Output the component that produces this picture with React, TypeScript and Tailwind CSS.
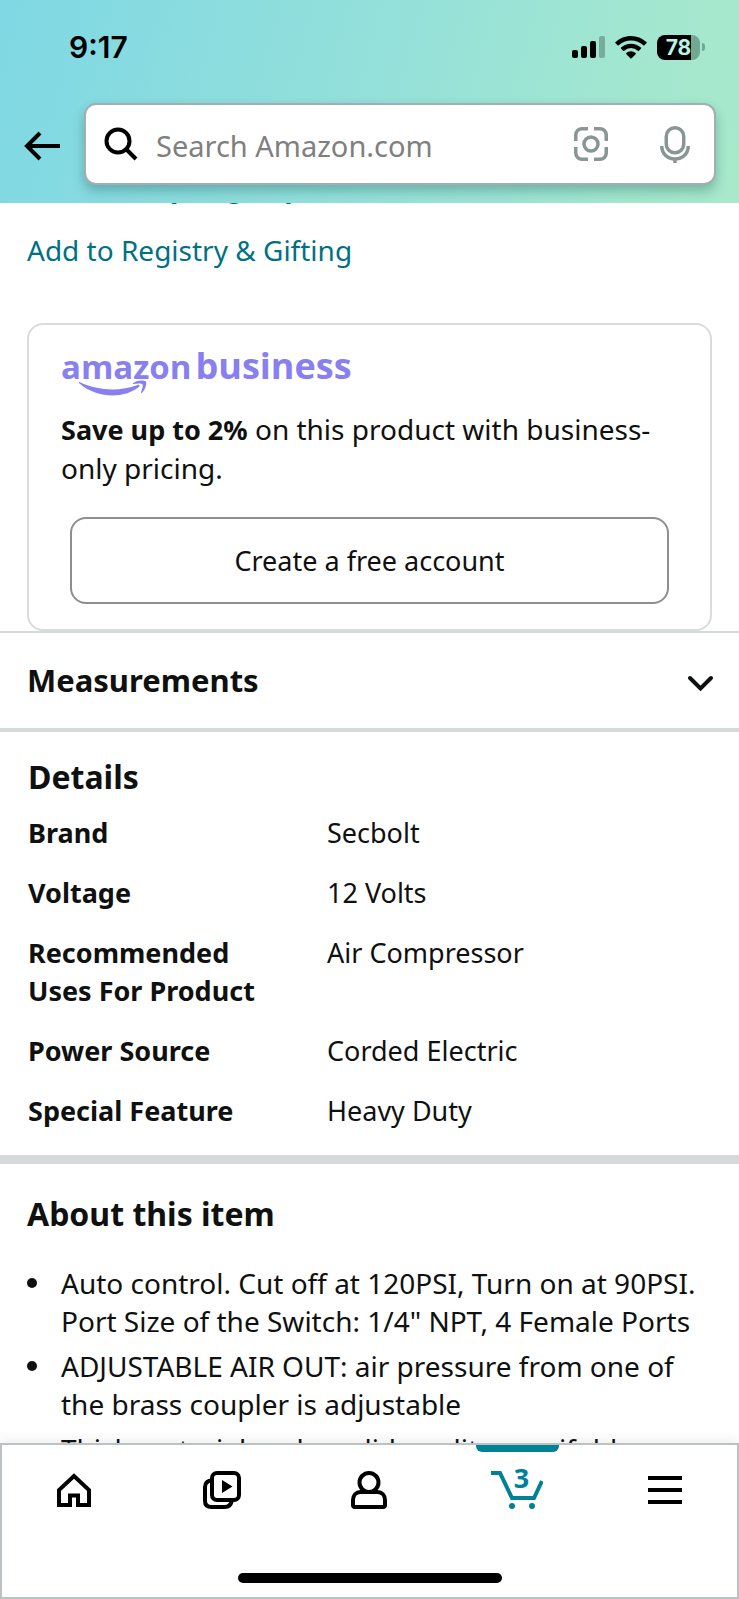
import React from 'react';

const details = [
  { label: 'Brand', value: 'Secbolt' },
  { label: 'Voltage', value: '12 Volts' },
  { label: 'Recommended Uses For Product', value: 'Air Compressor' },
  { label: 'Power Source', value: 'Corded Electric' },
  { label: 'Special Feature', value: 'Heavy Duty' },
];

const bullets = [
  'Auto control. Cut off at 120PSI, Turn on at 90PSI. Port Size of the Switch: 1/4" NPT, 4 Female Ports',
  'ADJUSTABLE AIR OUT: air pressure from one of the brass coupler is adjustable',
  'Thick material and a solid quality manifold',
];

const StatusBar = () => (
  <div className="flex items-center justify-between pl-[69px] pr-[34px] pt-8">
    <span className="font-[Inter] text-[30px] leading-[30px] font-semibold">9:17</span>
    <div className="flex items-center gap-[10px]">
      <svg width="33" height="22" viewBox="0 0 33 22" aria-label="Signal">
        <rect x="0" y="14" width="6" height="8" rx="2" />
        <rect x="9" y="10" width="6" height="12" rx="2" />
        <rect x="18" y="5" width="6" height="17" rx="2" />
        <rect x="27" y="0" width="6" height="22" rx="2" opacity="0.25" />
      </svg>
      <svg width="32" height="24" viewBox="0 0 32 24" aria-label="Wi-Fi">
        <path d="M16 1C10 1 4.600 3.300.6 7.100a.8.800 0 0 0 0 1.200l2 2a.8.800 0 0 0 1.100 0A18 18 0 0 1 16 5.400a18 18 0 0 1 12.300 4.900.8.800 0 0 0 1.100 0l2-2a.8.800 0 0 0 0-1.200A22.300 22.300 0 0 0 16 1Z" />
        <path d="M16 8.700c-3.800 0-7.300 1.500-9.900 3.900a.8.800 0 0 0 0 1.200l2 2a.8.800 0 0 0 1.100 0A10 10 0 0 1 16 13.100a10 10 0 0 1 6.800 2.700.8.800 0 0 0 1.100 0l2-2a.8.800 0 0 0 0-1.200A14.500 14.500 0 0 0 16 8.700Z" />
        <path d="M16 16.200c-1.800 0-3.400.7-4.600 1.800a.8.800 0 0 0 0 1.200l4 4a.8.800 0 0 0 1.200 0l4-4a.8.800 0 0 0 0-1.200 6.800 6.800 0 0 0-4.600-1.800Z" />
      </svg>
      <div className="flex items-center gap-[2px]">
        <div className="flex h-[25px] w-[43px] items-center justify-center rounded-[8px] bg-[linear-gradient(90deg,#000_79%,#70a894_79%)] font-[Inter] text-[21px] leading-[25px] font-bold text-[#b8f5e4]">
          78
        </div>
        <div className="h-2 w-[3px] rounded-r-full bg-[#70a894]" />
      </div>
    </div>
  </div>
);

const SearchBar = () => (
  <div className="flex items-center pt-[41px] pr-[23px] pb-[18px] pl-6">
    <button aria-label="Back" className="mr-6 pt-1">
      <svg width="36" height="30" viewBox="0 0 36 30" fill="none" stroke="#000" strokeWidth="4">
        <path d="M16 2 3 15l13 13M3 15h33" />
      </svg>
    </button>
    <form className="flex h-[82px] min-w-0 flex-1 items-center rounded-xl border-2 border-[#a3aeb0] bg-white pl-[18px] pr-[24px] shadow-[0_6px_12px_rgba(0,70,70,0.3)]">
      <svg className="shrink-0" width="34" height="34" viewBox="0 0 34 34" fill="none" stroke="#000" strokeWidth="4">
        <circle cx="14" cy="14" r="11.500" />
        <path d="m22 22 10 10" />
      </svg>
      <input
        type="text"
        aria-label="Search Amazon.com"
        placeholder="Search Amazon.com"
        className="ml-[18px] min-w-0 flex-1 pt-1 text-[29px] leading-[38px] outline-none placeholder:text-[#7f7f7f] placeholder:opacity-100"
      />
      <button type="button" aria-label="Search by camera">
        <svg width="34" height="34" viewBox="0 0 34 34" fill="none" stroke="#8a9696" strokeWidth="3.500">
          <path d="M14 1.750H8A6.250 6.250 0 0 0 1.750 8v6M20 1.750h6A6.250 6.250 0 0 1 32.250 8v6M32.250 20v6A6.250 6.250 0 0 1 26 32.250h-6M14 32.250H8A6.250 6.250 0 0 1 1.750 26v-6" />
          <circle cx="17" cy="17" r="7" />
        </svg>
      </button>
      <button type="button" aria-label="Search by voice" className="ml-[52px]">
        <svg width="30" height="37" viewBox="0 0 30 37" fill="none" stroke="#8a9696" strokeWidth="3.500">
          <rect x="6.250" y="1.750" width="17.500" height="25" rx="8.750" />
          <path d="M1.750 20c0 8 6 13 13.250 13s13.250-5 13.250-13M15 33v4" />
        </svg>
      </button>
    </form>
  </div>
);

const BusinessCard = () => (
  <section className="mx-[27px] mt-[54px] rounded-2xl border-2 border-[#d9dcdc] px-8 pt-[17px] pb-[25px]">
    <div className="relative text-[#8880f0]">
      <div className="flex items-baseline gap-[4px] font-['Open_Sans'] text-[36px] leading-[48px] font-bold">
        <span className="text-[33px]">amazon</span>
        <span>business</span>
      </div>
      <svg className="absolute top-[38px] left-[18px]" width="68" height="17" viewBox="0 0 68 17" fill="currentColor">
        <path d="M.5 2C18 10.500 40 12 58.500 5c2-.8 3 .8 1 2.200C44 19 18 18.500.2 3.200-.3 2.500 0 1.700.5 2Z" />
        <path d="M54 3.200C58 .2 64 .1 67 1.400c1 2-.7 8.300-4 11.300-.7.500-1.300.3-1-.5 1-2.500 2.300-6.800 1.500-8-1.300-1.200-6-.6-8.700-.2-.8.100-1.300-.4-.8-.8Z" />
      </svg>
    </div>
    <p className="mt-[19px] text-[28px] leading-[38px]">
      <strong className="text-[27px]">Save up to 2%</strong> on this product with business-only pricing.
    </p>
    <button className="mx-auto mt-[30px] block h-[87px] w-[calc(100%-18px)] rounded-2xl border-2 border-[#8c8f8f] text-[27px] leading-[38px]">
      Create a free account
    </button>
  </section>
);

const BottomNav = () => (
  <nav className="relative z-10 shrink-0 border-2 border-[#bcc1c4] bg-white shadow-[0_-2px_12px_rgba(0,0,0,0.08)]">
    <div className="-mx-0.5 grid h-[90px] grid-cols-5 justify-items-center">
      <a href="#home" aria-label="Home" className="flex items-center">
        <svg width="34" height="36" viewBox="0 0 34 36" fill="none" stroke="#000" strokeWidth="4">
          <path d="M2 33V18L17 4l15 14v15H21v-9.500h-8V33H2Z" />
        </svg>
      </a>
      <a href="#inspire" aria-label="Inspire" className="flex items-center">
        <svg width="38" height="38" viewBox="0 0 38 38" fill="none" stroke="#000" strokeWidth="4">
          <rect x="9" y="2" width="27" height="27" rx="5" />
          <path d="M9 9.500C4.500 9.500 2 12 2 16v14c0 4 2.500 6 6.500 6h13c4 0 6.800-2 7.300-6.500" />
          <path d="M19 9v13l10.500-6.500Z" fill="#000" stroke="none" />
        </svg>
      </a>
      <a href="#account" aria-label="Account" className="flex items-center">
        <svg width="36" height="38" viewBox="0 0 36 38" fill="none" stroke="#000" strokeWidth="4">
          <circle cx="18" cy="11.500" r="9.500" />
          <path d="M9.500 21h17c4.500 0 7.500 3.500 7.500 8v5c0 1.200-.8 2-2 2H4c-1.200 0-2-.8-2-2v-5c0-4.500 3-8 7.500-8Z" />
        </svg>
      </a>
      <a href="#cart" aria-label="Cart, 3 items" className="relative flex w-[83px] items-center justify-center text-[#008296]">
        <span className="absolute inset-x-0 top-0 h-[7px] rounded-b-md bg-[#008296]" />
        <svg width="52" height="42" viewBox="0 0 52 42" fill="none" stroke="currentColor" strokeWidth="4">
          <path d="M0 4h9l12 25h22l8-17" />
          <circle cx="21" cy="37" r="3" fill="currentColor" stroke="none" />
          <circle cx="41" cy="37" r="3" fill="currentColor" stroke="none" />
        </svg>
        <span className="absolute top-[18px] left-[38px] text-[27px] leading-[30px] font-bold">3</span>
      </a>
      <a href="#menu" aria-label="Menu" className="flex items-center">
        <svg width="34" height="28" viewBox="0 0 34 28" stroke="#000" strokeWidth="4">
          <path d="M0 2h34M0 14h34M0 26h34" />
        </svg>
      </a>
    </div>
    <div className="mx-auto mt-[38px] mb-[14px] h-[10px] w-[264px] rounded-full bg-black" />
  </nav>
);

const App = () => {
  return (
    <div className="flex h-screen flex-col overflow-hidden bg-white font-['Noto_Sans',sans-serif] text-[#0f1111]">
      <header className="relative z-10 shrink-0 overflow-hidden bg-[linear-gradient(105deg,#7fd8e4_0%,#94e0da_50%,#a3e7cf_85%,#a8e9cb_100%)] text-black">
        <StatusBar />
        <SearchBar />
      </header>

      <main className="min-h-0 flex-1 overflow-hidden">
        <div className="-mt-[36px] flex flex-col items-start gap-[26px] px-[27px] text-[28px] leading-[38px] text-[#007185]">
          <a href="#baby">Add to Baby Registry</a>
          <a href="#registry">Add to Registry &amp; Gifting</a>
        </div>

        <BusinessCard />

        <button className="flex w-full items-center justify-between border-t-2 border-b-4 border-[#d5d9d9] pt-[27px] pr-[25px] pb-[28px] pl-[27px] text-left">
          <span className="text-[31px] leading-[40px] font-bold">Measurements</span>
          <svg width="27" height="26" viewBox="0 0 27 26" fill="none" stroke="#0f1111" strokeWidth="4" strokeLinecap="round">
            <path d="m3 11 10.500 10.500L24 11" />
          </svg>
        </button>

        <section className="border-b-[9px] border-[#d5d9d9] px-[28px] pt-[25px] pb-[14px]">
          <h2 className="text-[32px] leading-[40px] font-bold">Details</h2>
          <table className="mt-[6px] w-full table-fixed text-left text-[27px] leading-[38px]">
            <tbody>
              {details.map((row) => (
                <tr key={row.label}>
                  <th scope="row" className="w-[299px] py-[11px] pr-12 align-top font-bold">{row.label}</th>
                  <td className="py-[11px] align-top">{row.value}</td>
                </tr>
              ))}
            </tbody>
          </table>
        </section>

        <section className="px-[27px] pt-[30px]">
          <h2 className="text-[32px] leading-[40px] font-bold">About this item</h2>
          <ul className="mt-[30px] space-y-[7px] text-[28px] leading-[38px]">
            {bullets.map((text) => (
              <li key={text} className="flex">
                <span className="mt-[14px] mr-6 h-[10px] w-[10px] shrink-0 rounded-full bg-[#0f1111]" />
                <span>{text}</span>
              </li>
            ))}
          </ul>
        </section>
      </main>

      <BottomNav />
    </div>
  );
};

export default App;
